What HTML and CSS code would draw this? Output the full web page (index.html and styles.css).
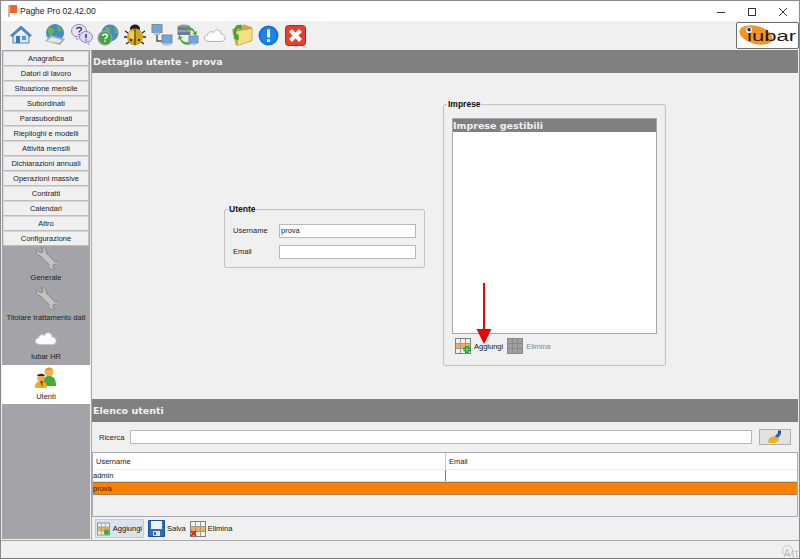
FILE: index.html
```html
<!DOCTYPE html>
<html lang="it">
<head>
<meta charset="utf-8">
<title>Paghe Pro 02.42.00</title>
<link rel="stylesheet" href="styles.css">
</head>
<body>
<div class="window">
  <header class="titlebar">
    <svg class="appflag" width="12" height="14" viewBox="0 0 12 14"><rect x="1" y="1" width="2" height="12" fill="#c8b8a8"/><path d="M3 1h7v8H3z" fill="#f0642a"/></svg>
    <span class="apptitle">Paghe Pro 02.42.00</span>
    <div class="winbtns">
      <svg width="12" height="12" viewBox="0 0 12 12"><path d="M2 6.500h8" stroke="#333" fill="none"/></svg>
      <svg width="12" height="12" viewBox="0 0 12 12"><rect x="2.500" y="2.500" width="7" height="7" stroke="#333" fill="none"/></svg>
      <svg width="12" height="12" viewBox="0 0 12 12"><path d="M2 2l8 8M10 2l-8 8" stroke="#333" fill="none"/></svg>
    </div>
  </header>

  <div class="toolbar">
    <svg class="t-icon home" width="22" height="22" viewBox="0 0 22 22"><path d="M3 11v8h16v-8" fill="#dfe8f2" stroke="#5b7d9c"/><rect x="12" y="12" width="4" height="4" fill="#4f9bde"/><rect x="6" y="12" width="4" height="7" fill="#3b78b8"/><path d="M0.500 11.500L11 2l10.500 9.500-2 1L11 5 2.500 12.500z" fill="#3f8fd6" stroke="#27608f" stroke-width=".6"/></svg>
    <svg class="t-icon globefax" width="22" height="22" viewBox="0 0 22 22"><circle cx="11" cy="9" r="9" fill="#3f8fc4"/><path d="M4 4c3-1 5 0 6 2s-2 3-3 6c-2-1-4-4-3-8zM13 2c2 0 4 2 5 5l-4 0z" fill="#6fb04a"/><path d="M1 17l6-6 14 4-5 6z" fill="#a9abaa"/><path d="M3 17l5-4 10 3-3 3z" fill="#e6e6e6"/></svg>
    <svg class="t-icon bubbles" width="22" height="22" viewBox="0 0 22 22"><ellipse cx="8" cy="7" rx="7.500" ry="6.500" fill="#e8e6f4" stroke="#8d88b8"/><path d="M5 12l1 4 3-3z" fill="#e8e6f4" stroke="#8d88b8" stroke-width=".6"/><ellipse cx="15" cy="13" rx="6.500" ry="5.500" fill="#dcdaf0" stroke="#8d88b8"/><path d="M15 18l3 3 0-4z" fill="#dcdaf0" stroke="#8d88b8" stroke-width=".6"/><path d="M5.500 5c.5-2 5-2 5 0 0 2-2.500 1.500-2.500 3.500M8 10v1" stroke="#26337a" stroke-width="1.300" fill="none"/><path d="M15 10v4M15 15.500v1" stroke="#26337a" stroke-width="1.500"/></svg>
    <svg class="t-icon globehelp" width="22" height="22" viewBox="0 0 22 22"><circle cx="13" cy="9" r="8.500" fill="#3f8fc4"/><path d="M9 3c3 0 5 1 4 4s-3 2-3 5c-2-1-3-5-1-9zM17 3c2 1 4 3 4 6l-3 0z" fill="#6fb04a"/><circle cx="8" cy="14" r="7.500" fill="#9a9a9a"/><circle cx="8" cy="14" r="6" fill="#3fa535"/><path d="M5.500 12c.3-2.500 5-2.500 5 0 0 1.800-2.500 1.500-2.500 3.300M8 16.500v1.500" stroke="#fff" stroke-width="1.500" fill="none"/></svg>
    <svg class="t-icon bug" width="22" height="22" viewBox="0 0 22 22"><path d="M4 9L1 7M3 13H0M5 18l-3 2M18 9l3-2M19 13h3M17 18l3 2" stroke="#222" stroke-width="1.300"/><ellipse cx="11" cy="4.500" rx="5" ry="4" fill="#1e1e1e"/><ellipse cx="11" cy="13" rx="8" ry="8.500" fill="#d2a41c"/><ellipse cx="8" cy="11" rx="3" ry="4" fill="#f2d04a"/><path d="M11 5v16" stroke="#3a2c08"/><circle cx="7" cy="16" r="1.200" fill="#3a2c08"/><circle cx="15" cy="16" r="1.200" fill="#3a2c08"/></svg>
    <svg class="t-icon network" width="22" height="22" viewBox="0 0 22 22"><path d="M6 9v8h6" stroke="#555" stroke-width="1.500" fill="none"/><rect x="1" y="0.500" width="10" height="8" fill="#6da7e0" stroke="#7d8a99"/><rect x="3" y="8.500" width="6" height="2.500" fill="#b6bfca"/><rect x="11" y="11" width="10" height="8" fill="#6da7e0" stroke="#7d8a99"/><rect x="12" y="19" width="8" height="2.500" fill="#b6bfca"/></svg>
    <svg class="t-icon dbsync" width="22" height="22" viewBox="0 0 22 22"><ellipse cx="7" cy="3" rx="6.500" ry="2.500" fill="#8b97ab"/><rect x="0.500" y="3" width="13" height="8" fill="#6d7a90"/><path d="M1 7h12" stroke="#c0c8d4"/><path d="M8 5c4-3 9-1 10 3l2-1-1 5-4-3 2 0c-1-3-5-4-8-2z" fill="#48a83c"/><path d="M14 20c-4 2-10 0-11-5l-2 1 1-5 4 3-2 0c1 4 5 5 9 4z" fill="#48a83c"/><rect x="12" y="12" width="9" height="7" fill="#6da7e0" stroke="#7d8a99"/><rect x="14" y="19" width="5" height="2" fill="#b6bfca"/></svg>
    <svg class="t-icon cloud" width="22" height="14" viewBox="0 0 22 14"><path d="M5 13.500c-6 0-6-6-1.500-6.500C4 3.500 8 3 9.500 4.500 11 .5 17 1 17 6c5 0 6 7.500 0 7.500z" fill="#fbfbfb" stroke="#b4b4b4"/></svg>
    <svg class="t-icon folder" width="22" height="24" viewBox="0 0 23 24"><path d="M1 6l13-5 8 3v14L5 23z" fill="#c8ad3c"/><path d="M5 8l17-3v13L7 23z" fill="#f2e083" stroke="#b1993a" stroke-width=".7"/><path d="M5 3c-3 3-3 8-1 11l-2 1 6 3 0-7-2 1c-1-2-1-5 1-7l4 1 0-5-6 1z" fill="#3fa33a"/></svg>
    <svg class="t-icon info" width="21" height="21" viewBox="0 0 21 21"><circle cx="10.500" cy="10.500" r="10" fill="#1473d9"/><circle cx="10.500" cy="10.500" r="8" fill="#1a84ea"/><path d="M10.500 4.500v8" stroke="#fff" stroke-width="3"/><path d="M10.500 14.300v2.700" stroke="#fff" stroke-width="3"/></svg>
    <svg class="t-icon close" width="21" height="21" viewBox="0 0 21 21"><rect x="0.500" y="0.500" width="20" height="20" rx="3" fill="#e8402c" stroke="#b02a1c"/><path d="M5.500 5.500l10 10M15.500 5.500l-10 10" stroke="#fff" stroke-width="4"/></svg>
    <div class="logo"><svg width="61" height="25" viewBox="0 0 61 25"><ellipse cx="19" cy="12" rx="17" ry="9" transform="rotate(15 19 12)" fill="#f7941d"/><circle cx="12" cy="7" r="3" fill="#fff"/><circle cx="12" cy="6.500" r="1.700" fill="#1a2fc0"/><text class="logotext" x="10" y="18" textLength="49" lengthAdjust="spacingAndGlyphs">iubar</text></svg></div>
  </div>

  <div class="body">
    <nav class="sidebar">
      <div class="navbtn">Anagrafica</div>
      <div class="navbtn">Datori di lavoro</div>
      <div class="navbtn">Situazione mensile</div>
      <div class="navbtn">Subordinati</div>
      <div class="navbtn">Parasubordinati</div>
      <div class="navbtn">Riepiloghi e modelli</div>
      <div class="navbtn">Attività mensili</div>
      <div class="navbtn">Dichiarazioni annuali</div>
      <div class="navbtn">Operazioni massive</div>
      <div class="navbtn">Contratti</div>
      <div class="navbtn">Calendari</div>
      <div class="navbtn">Altro</div>
      <div class="navbtn">Configurazione</div>
      <div class="navitem">
        <svg width="24" height="24" viewBox="0 0 24 24"><use href="#wrench"/></svg>
        <span>Generale</span>
      </div>
      <div class="navitem">
        <svg width="24" height="24" viewBox="0 0 24 24"><use href="#wrench"/></svg>
        <span>Titolare trattamento dati</span>
      </div>
      <div class="navitem">
        <svg width="22" height="16" viewBox="0 0 22 14"><path d="M5 13.500c-6 0-6-6-1.500-6.500C4 3.500 8 3 9.500 4.500 11 .5 17 1 17 6c5 0 6 7.500 0 7.500z" fill="#fbfbfb" stroke="#c4c4c4"/></svg>
        <span>Iubar HR</span>
      </div>
      <div class="navitem active">
        <svg width="24" height="24" viewBox="0 0 24 24"><circle cx="15" cy="6" r="4.500" fill="#f3b04a"/><path d="M11 4c1-3 7-3 8 0z" fill="#e0a020"/><path d="M8 20c0-8 3-10 7-10s7 2 7 10z" fill="#3fae3f"/><circle cx="7" cy="12" r="3.800" fill="#f0a850"/><path d="M3 10c1-3 7-3 8 0z" fill="#2a2a2a"/><path d="M1 22c0-5 2-7 6-7s6 2 6 7z" fill="#e3b21c"/><path d="M6 15h3l-1 6z" fill="#c8281c"/></svg>
        <span>Utenti</span>
      </div>
    </nav>

    <main class="main">
      <h2 class="section-title">Dettaglio utente - prova</h2>
      <section class="detail">
        <fieldset class="group utente">
          <legend>Utente</legend>
          <div class="field"><label>Username</label><input class="input" type="text" value="prova"></div>
          <div class="field"><label>Email</label><input class="input" type="text"></div>
        </fieldset>
        <fieldset class="group imprese">
          <legend>Imprese</legend>
          <div class="listbox">
            <div class="listhead">Imprese gestibili</div>
          </div>
          <div class="actions">
            <span class="action"><svg width="16" height="16" viewBox="0 0 16 16"><use href="#grid"/><use href="#plus"/></svg><span>Aggiungi</span></span>
            <span class="action off"><svg width="16" height="16" viewBox="0 0 16 16"><rect x=".5" y=".5" width="15" height="15" fill="#a0a0a0" stroke="#8a8a8a"/><path d="M1 5.500h14M1 10.500h14M5.500 1v14M10.500 1v14" stroke="#8a8a8a"/></svg><span>Elimina</span></span>
          </div>
          <svg class="arrow" width="16" height="62" viewBox="0 0 16 62"><path d="M8 0v48" stroke="#f00000" stroke-width="2"/><path d="M0.500 46h15L8 61z" fill="#f00000"/></svg>
        </fieldset>
      </section>

      <h2 class="section-title">Elenco utenti</h2>
      <div class="search">
        <label>Ricerca</label>
        <input class="input wide" type="text">
        <button class="brush" type="button"><svg width="16" height="14" viewBox="0 0 16 14"><path d="M1 12c0-4 4-6 8-6l3 3c0 2-3 4-6 4H2z" fill="#e8b41c"/><path d="M8 6l4-4 2 2-3 4z" fill="#2a62c0"/><rect x="11" y="0.500" width="3" height="3" fill="#1a4aa0"/></svg></button>
      </div>
      <div class="table">
        <div class="row head"><div class="c1 hc1">Username</div><div class="c2 hc2">Email</div></div>
        <div class="row"><div class="c1">admin</div><div class="c2"></div></div>
        <div class="row sel"><div class="c1">prova</div><div class="c2"></div></div>
      </div>
      <div class="bottombar">
        <span class="bb pressed"><svg width="16" height="16" viewBox="0 0 16 16"><use href="#grid"/><circle cx="12" cy="12" r="3.500" fill="#3fae3f"/></svg><span>Aggiungi</span></span>
        <span class="bb"><svg width="17" height="17" viewBox="0 0 17 17"><path d="M.5.500h16v16H.5z" fill="#2a6ec4" stroke="#1d4f96"/><rect x="3" y="1" width="11" height="8" fill="#eef3fa"/><rect x="5" y="11" width="7" height="5" fill="#e4e4e4"/><rect x="6" y="12" width="2" height="3" fill="#2a6ec4"/></svg><span>Salva</span></span>
        <span class="bb"><svg width="16" height="16" viewBox="0 0 16 16"><use href="#grid"/><path d="M1 10l5 5M6 10l-5 5" stroke="#e0281c" stroke-width="2"/></svg><span>Elimina</span></span>
      </div>
    </main>
  </div>

  <footer class="statusbar">
    <span class="ring"></span>
    <span class="att">Att</span>
  </footer>
</div>

<svg class="defs" width="0" height="0">
  <defs>
    <g id="wrench"><path d="M3 3l3 3 3-1-0-3-3-2c4-.5 7 2 6 6l9 9c2-.5 4 .5 3 4l-3-2-2 1 0 3 2 1.500c-4 1-7-2-6-5l-9-9C3 8.500 1.500 6 3 3z" fill="#c4c4c4" stroke="#7b7b7b" stroke-width=".7"/></g>
    <g id="grid"><rect x=".5" y=".5" width="15" height="15" fill="#f4f1e6" stroke="#808080"/><rect x="1" y="5.500" width="14" height="4.500" fill="#f2b14c"/><path d="M1 5.500h14M1 10.500h14M5.500 1v14M10.500 1v14" stroke="#9a9a9a"/></g>
    <g id="plus"><path d="M12 8v7M8.500 11.500h7" stroke="#0c8a1e" stroke-width="3.500"/><path d="M12 8.500v6M9 11.500h6" stroke="#52e05a" stroke-width="1.500"/></g>
  </defs>
</svg>
</body>
</html>
```

FILE: styles.css
```css
* { box-sizing: border-box; }
html, body { margin: 0; padding: 0; }
body {
  width: 800px;
  height: 559px;
  overflow: hidden;
  font-family: "Liberation Sans", sans-serif;
  font-size: 7.500px;
  color: #222;
  background: #f0f0f0;
}
.window {
  width: 800px;
  height: 559px;
  display: flex;
  flex-direction: column;
  border: 1px solid #8a8a8a;
  border-bottom-color: #777;
  background: #f0f0f0;
}
.defs { position: absolute; }

.titlebar {
  height: 20px;
  flex: none;
  background: #fff;
  display: flex;
  align-items: center;
  padding-left: 6px;
}
.appflag { margin-right: 0; }
.apptitle { font-size: 8.500px; margin-left: 1px; color: #222; }
.winbtns {
  margin-left: auto;
  display: flex;
  gap: 19px;
  margin-right: 10px;
  margin-top: 1px;
}
.winbtns svg { display: block; }

.toolbar {
  height: 28px;
  flex: none;
  background: #f0f0f0;
  display: flex;
  align-items: center;
  padding-left: 9px;
}
.t-icon { flex: none; margin-right: 4.700px; }
.home { margin-right: 12px; }
.info { margin-right: 6px; }
.logo {
  margin-left: auto;
  margin-right: 0;
  width: 63px;
  height: 27px;
  background: #fff;
  border: 1px solid #6e6e6e;
  border-radius: 2px;
  overflow: hidden;
}
.logo svg { display: block; }
.logotext {
  font-family: "Liberation Sans", sans-serif;
  font-size: 14px;
  fill: #1a1a1a;
}

.body { flex: 1; display: flex; min-height: 0; }
.sidebar {
  width: 88px;
  flex: none;
  margin: 1px 0 1px 1px;
  padding-top: 1px;
  background: #a4a4a8;
  display: flex;
  flex-direction: column;
}
.navbtn {
  height: 15px;
  flex: none;
  background: #f0f0f0;
  border: 1px solid #d6d6d6;
  border-right-color: #c4c4c4;
  border-bottom-color: #bcbcbc;
  text-align: center;
  line-height: 13px;
  white-space: nowrap;
  margin-left: 1px;
  margin-right: 1px;
}
.navitem {
  height: 39.500px;
  flex: none;
  display: flex;
  flex-direction: column;
  align-items: center;
  justify-content: flex-start;
  padding-top: 1px;
  white-space: nowrap;
}
.navitem svg { height: 24px; display: block; margin-bottom: 2px; }
.navitem.active { background: #fff; }

.main {
  flex: 1;
  min-width: 0;
  margin: 1px 1px 0 1px;
  display: flex;
  flex-direction: column;
  border-left: 1px solid #a8a8a8;
}
.section-title {
  height: 23px;
  flex: none;
  margin: 0;
  padding-left: 1px;
  background: #808080;
  color: #f2f2f2;
  font-family: "DejaVu Sans", sans-serif;
  font-weight: bold;
  font-size: 9.500px;
  line-height: 24px;
}
.detail {
  height: 326px;
  flex: none;
  display: flex;
  align-items: center;
  justify-content: center;
  gap: 18px;
  padding-bottom: 6px;
}
.group {
  margin: 0;
  padding: 0;
  border: 1px solid #c4c4c4;
  border-radius: 2px;
  box-shadow: inset 0 0 0 1px #ececec;
  position: relative;
}
.group legend {
  margin-left: -5px;
  padding: 0 1px;
  font-family: "Liberation Sans", sans-serif;
  font-weight: bold;
  font-size: 8.500px;
  line-height: 9px;
  color: #111;
}
.utente {
  width: 200px;
  height: 63px;
  padding: 10px 8px 0 8px;
  margin-top: 6px;
}
.field { display: flex; align-items: center; height: 14px; margin-bottom: 7px; }
.field label { width: 46px; }
.input {
  height: 14px;
  padding: 0 1px;
  border: 1px solid #b8b8b8;
  background: #fff;
  font-family: "Liberation Sans", sans-serif;
  font-size: 7.500px;
  color: #222;
  outline: none;
}
.field .input { width: 137px; }
.imprese {
  width: 222px;
  height: 266px;
  padding: 9px 8px 0 8px;
}
.listbox {
  width: 205px;
  height: 216px;
  background: #fff;
  border: 1px solid #a6a6ae;
}
.listhead {
  height: 13px;
  background: #808080;
  color: #f0f0f0;
  font-family: "DejaVu Sans", sans-serif;
  font-weight: bold;
  font-size: 9.500px;
  line-height: 13px;
}
.actions {
  display: flex;
  align-items: center;
  gap: 4px;
  padding: 4px 3px;
}
.action { display: flex; align-items: center; gap: 3px; color: #111; }
.action svg { display: block; }
.action.off { color: #888; }
.arrow { position: absolute; left: 32px; top: 174px; }

.search {
  height: 30px;
  flex: none;
  display: flex;
  align-items: center;
  padding: 0 7px;
}
.search label { width: 31px; flex: none; }
.search .wide { flex: 1; min-width: 0; height: 14px; margin-right: 7px; }
.brush {
  width: 32px;
  height: 16px;
  flex: none;
  padding: 0;
  background: #e2e2e2;
  border: 1px solid #b0b0b0;
  display: flex;
  align-items: center;
  justify-content: center;
}
.table {
  height: 65px;
  flex: none;
  border: 1px solid #a8a8b0;
}
.row { display: flex; height: 12px; line-height: 11px; background: #fff; border-bottom: 1px solid #ddd; }
.row.head { height: 17px; line-height: 18px; background: #fff; border-bottom: 1px solid #ececec; }
.row.sel { height: 13px; background: #ff8000; border-top: 1px solid #b07030; border-bottom: 1px solid #a08060; color: #3a1a00; }
.c1 { width: 353px; border-right: 1px solid #777; }
.c2 { flex: 1; padding-left: 3px; }
.hc1 { padding-left: 3px; border-right-color: #c8c8c8; }
.row.sel .c1 { border-right: none; }
.bottombar {
  height: 23px;
  flex: none;
  display: flex;
  align-items: center;
  padding-left: 3px;
  gap: 4px;
  color: #111;
}
.bb { display: flex; align-items: center; gap: 2px; height: 19px; }
.bb svg { display: block; }
.bb.pressed { background: #d8e4ee; border: 1px solid #b8cfe0; width: 49px; padding: 0 1px; gap: 3px; }

.statusbar {
  height: 18px;
  flex: none;
  border-top: 1px solid #a8a8a8;
  position: relative;
  overflow: hidden;
  background: #f0f0f0;
}
.ring {
  position: absolute;
  right: 6px;
  top: 4px;
  width: 11px;
  height: 11px;
  border: 1px solid #c8c8c8;
  border-radius: 50%;
}
.att { position: absolute; right: 0; top: 7px; font-size: 10px; color: #bbb; letter-spacing: 1px; }
```
